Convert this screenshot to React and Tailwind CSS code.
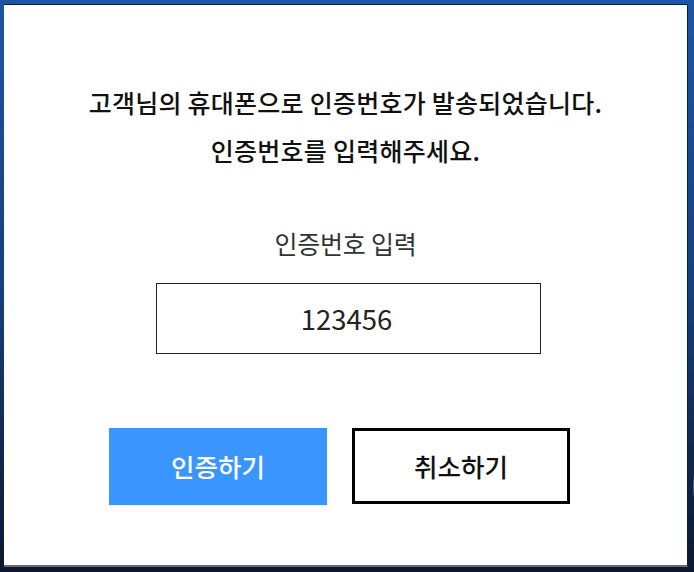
const font = { fontFamily: '"Noto Sans CJK KR", "Noto Sans", sans-serif' };

export default function App() {
    return (
        <div
            className="relative w-[694px] h-[572px] overflow-hidden bg-gradient-to-b from-[#1c55a6] via-[#16407f] to-[#0b1830]"
            style={font}
        >
            <svg className="absolute inset-0 w-full h-full" viewBox="0 0 694 572" fill="none">
                <path d="M740 430 C 700 445, 684 470, 700 520" stroke="#8a9bb8" strokeWidth="1.5" opacity="0.7" />
                <path d="M720 560 C 695 520, 688 490, 712 455" stroke="#8a9bb8" strokeWidth="1.2" opacity="0.6" />
            </svg>

            <div className="relative ml-[4px] mt-[4px] w-[684px] h-[563px] bg-white border-t border-r border-t-[#0a1a3c] border-r-[#0a1a3c] border-b-2 border-b-[#6b6b6b]">
                <div className="flex flex-col items-center pt-[73px]">
                    <p className="text-[25px] leading-[48px] tracking-[0.25px] font-medium text-[#111]">
                        고객님의 휴대폰으로 인증번호가 발송되었습니다.
                    </p>
                    <p className="text-[25px] leading-[48px] tracking-[0.25px] font-medium text-[#111]">
                        인증번호를 입력해주세요.
                    </p>

                    <p className="mt-[53px] text-[25px] leading-[32px] tracking-[-0.25px] text-[#333]">
                        인증번호 입력
                    </p>

                    <div className="self-start ml-[152px] mt-[24px] w-[385px] h-[71px] border border-[#222] flex items-center justify-center">
                        <span className="text-[27.5px] text-[#222] pr-[4px]">123456</span>
                    </div>
                </div>

                <div className="flex gap-[25px] pl-[105px] mt-[74px]">
                    <button className="w-[218px] h-[77px] bg-[#3b95ff] text-white text-[25.5px] font-medium flex items-center justify-center">
                        인증하기
                    </button>
                    <button className="w-[218px] h-[76px] bg-white border-[3px] border-black text-[#111] text-[25.5px] font-medium flex items-center justify-center">
                        취소하기
                    </button>
                </div>
            </div>
        </div>
    );
}
